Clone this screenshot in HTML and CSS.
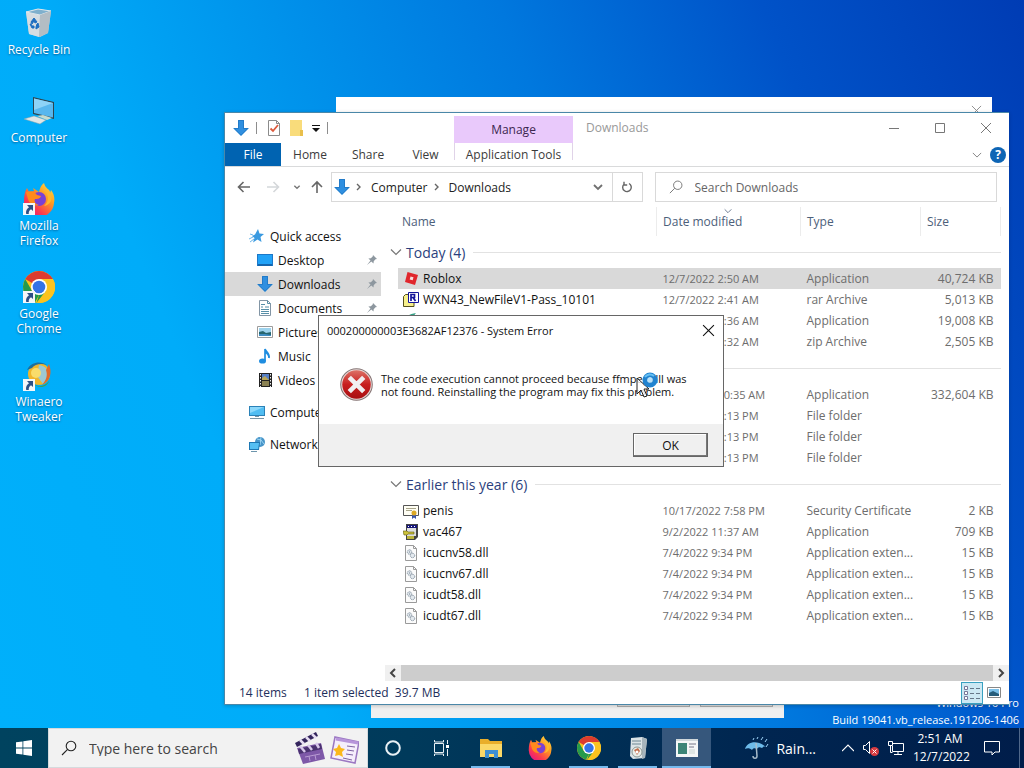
FILE: index.html
```
<!DOCTYPE html>
<html lang="en">
<head>
    <meta charset="UTF-8">
    <meta name="viewport" content="width=device-width, initial-scale=1.0">
    <title>Downloads</title>
    <link rel="stylesheet" href="styles.css">
</head>
<body>
    <!-- Shared icons -->
    <svg class="sprite" aria-hidden="true">
        <symbol id="i-down" viewBox="0 0 16 16">
            <path d="M5 0h6v8h5l-8 8-8-8h5z" fill="#2f8fe0"/>
            <path d="M5.500.5h5v8h4.300L8 15.200 1.200 8.500h4.300z" fill="none" stroke="#1e73bd" stroke-width=".7"/>
        </symbol>
        <symbol id="i-pin" viewBox="0 0 12 12">
            <path d="M7 1l4 4-1.500.3L7.700 7.200 7.500 9.500 5.300 7.400 1 11l3.500-4.400L2.400 4.500l2.400-.2L6.700 2.500z" fill="#8d979f"/>
        </symbol>
        <symbol id="i-dll" viewBox="0 0 16 16">
            <path d="M2.500.5h8l3 3v12h-11z" fill="#fbfbfb" stroke="#9a9a9a"/>
            <path d="M10.500.5v3h3" fill="none" stroke="#9a9a9a"/>
            <circle cx="6.500" cy="7" r="2.200" fill="#e3e9ee" stroke="#8695a3" stroke-dasharray="1.200 .5"/>
            <circle cx="9.500" cy="10.500" r="2.200" fill="#e3e9ee" stroke="#8695a3" stroke-dasharray="1.200 .5"/>
            <circle cx="6.500" cy="7" r=".7" fill="#8695a3"/>
        </symbol>
        <symbol id="i-chev" viewBox="0 0 12 12">
            <path d="M1 3.500l5 5 5-5" fill="none" stroke="currentColor" stroke-width="1.200"/>
        </symbol>
        <symbol id="i-close" viewBox="0 0 12 12">
            <path d="M1 1l10 10M11 1L1 11" fill="none" stroke="currentColor" stroke-width="1"/>
        </symbol>
        <symbol id="i-search" viewBox="0 0 16 16">
            <circle cx="10" cy="6" r="4.800" fill="none" stroke="currentColor" stroke-width="1.100"/>
            <path d="M6.600 9.400L1 15" stroke="currentColor" stroke-width="1.100"/>
        </symbol>
        <symbol id="i-shortcut" viewBox="0 0 12 12">
            <path d="M0 0h12v12H0z" fill="#f4f6f8"/>
            <path d="M4 2h6v6L8 6.200C6 7.500 5.500 9 5.800 11H3.200C2.500 8 3.800 5.800 6 4.200z" fill="#2d4f85"/>
        </symbol>
        <symbol id="i-chrome" viewBox="0 0 32 32">
            <circle cx="16" cy="16" r="16" fill="#fbc31f"/>
            <path d="M16 16L2.200 8A16 16 0 0 1 29.900 8H16z" fill="#dc3b2e"/>
            <path d="M2.200 8l6.900 12L16 24l-4 7.500A16 16 0 0 1 2.200 8z" fill="#259a4c"/>
            <path d="M9.100 20L16 24l-2.500 7.800L22.900 20z" fill="#259a4c"/>
            <path d="M22.900 20L15 32A16 16 0 0 0 29.900 8H16z" fill="#fbc31f"/>
            <circle cx="16" cy="16" r="8" fill="#fff"/>
            <circle cx="16" cy="16" r="6.300" fill="#3473e6"/>
        </symbol>
        <symbol id="i-firefox" viewBox="0 0 32 32">
            <defs>
                <linearGradient id="ff" x1="1" y1="0" x2=".2" y2="1">
                    <stop offset="0" stop-color="#ffe94a"/>
                    <stop offset=".4" stop-color="#ff9a22"/>
                    <stop offset=".75" stop-color="#fb3b4e"/>
                    <stop offset="1" stop-color="#e31587"/>
                </linearGradient>
            </defs>
            <path d="M4 5l2 4 5-1-1-3 6 4c1-4 2-7 5-9 1 4 3 5 5 7 1 1 1 2 1 3l1-3c3 4 4 8 3 13a15 15 0 0 1-30-2C1 13 2 8 4 5z" fill="url(#ff)"/>
            <circle cx="16" cy="16" r="7" fill="#7a41d4"/>
            <path d="M3 9c5-2 9 0 11 3l4 1c-1 3-4 3-6 3-1 2 0 5 4 6-6 2-10-2-11-6z" fill="#ff8a1c"/>
            <path d="M20 7c6 3 7 11 1 16 6-1 9-6 7-12-2-3-5-4-8-4z" fill="#ffb82c"/>
        </symbol>
    </svg>

    <main class="desktop">
        <!-- Desktop shortcuts -->
        <nav class="shortcuts">
            <a href="#" class="shortcut">
                <svg viewBox="0 0 32 32">
                    <path d="M3 5l12-3 13 2-3 22-8 4-11-3z" fill="#c3ccd3"/>
                    <path d="M3 5l14 3-1 22-10-3z" fill="#d5dde2"/>
                    <path d="M3 5l12-3 13 2-11 4z" fill="#7fb0cd" stroke="#dfe8ec"/>
                    <path d="M17 8l11-4-3 22-9 4z" fill="#b3bdc4"/>
                    <path d="M8 15l3-4 3 4-2 1-1-2-2 3zM7 17l2 4h2v-2H9l-1-2zM15 16l1 4-3 2v-2l1-3z" fill="#1d6ec1" stroke="#1d6ec1"/>
                </svg>
                <span>Recycle Bin</span>
            </a>
            <a href="#" class="shortcut">
                <svg viewBox="0 0 32 32">
                    <path d="M10 2l21 5v17l-21-5z" fill="#2e4550"/>
                    <path d="M11 3.500l19 4.500v14.500L11 18z" fill="#58b7ee"/>
                    <path d="M11 3.500l19 4.500L11 15z" fill="#8ed3f7"/>
                    <path d="M1 24l10-3 12 4-6 4z" fill="#dfe6e7" stroke="#8ba0a5" stroke-width=".5"/>
                    <path d="M14 21l6-1 9 3-5 2z" fill="#c7dccf"/>
                </svg>
                <span>Computer</span>
            </a>
            <a href="#" class="shortcut">
                <svg viewBox="0 0 32 32">
                    <use href="#i-firefox" width="32" height="32"/>
                    <use href="#i-shortcut" y="20" width="12" height="12"/>
                </svg>
                <span>Mozilla Firefox</span>
            </a>
            <a href="#" class="shortcut">
                <svg viewBox="0 0 32 32">
                    <use href="#i-chrome" width="32" height="32"/>
                    <use href="#i-shortcut" y="20" width="12" height="12"/>
                </svg>
                <span>Google Chrome</span>
            </a>
            <a href="#" class="shortcut">
                <svg viewBox="0 0 32 32">
                    <circle cx="16" cy="15" r="11" fill="#f0b62d"/>
                    <path d="M16 6a10 10 0 0 1 4 19l-6-8z" fill="#9dc8d2"/>
                    <circle cx="13" cy="14" r="5" fill="#f9dc6b"/>
                    <path d="M4 11C8 2 19 2 24 6c-6-2-12-1-15 3z" fill="#1d6f9c"/>
                    <path d="M26 5c3 8 2 17-7 21 4-5 6-9 4-15z" fill="#e06a2a"/>
                    <path d="M11 25c5 4 11 2 15-3-1 5-9 9-15 3z" fill="#3f9e56"/>
                    <use href="#i-shortcut" y="20" width="12" height="12"/>
                </svg>
                <span>Winaero Tweaker</span>
            </a>
        </nav>

        <p class="watermark">Windows 10 Pro<br>Build 19041.vb_release.191206-1406</p>

        <!-- Windows behind the explorer -->
        <div class="window back-window">
            <svg class="back-close"><use href="#i-close"/></svg>
        </div>
        <div class="window setup-window">
            <button></button>
            <button></button>
        </div>

        <!-- File explorer -->
        <section class="window explorer">
            <header class="titlebar">
                <div class="quick-bar">
                    <svg class="ic"><use href="#i-down"/></svg>
                    <i class="bar"></i>
                    <svg class="ic check" viewBox="0 0 16 16">
                        <path d="M2.500.5h8l3 3v12h-11z" fill="#fff" stroke="#8b8b8b"/>
                        <path d="M10.500.5v3h3" fill="none" stroke="#8b8b8b"/>
                        <path d="M4.500 8.500L7 11l5-6" fill="none" stroke="#dd5a3c" stroke-width="1.800"/>
                    </svg>
                    <svg class="ic" viewBox="0 0 16 16">
                        <path d="M1 0h12v10h1v6H1z" fill="#f9dc7b"/>
                        <path d="M11 10h3v6h-3z" fill="#e9bf4c"/>
                    </svg>
                    <svg class="drop" viewBox="0 0 8 8"><path d="M0 1.500h8" stroke="#111"/><path d="M0 4h8L4 8z" fill="#111"/></svg>
                    <i class="bar"></i>
                </div>
                <div class="context-tab">Manage</div>
                <h1>Downloads</h1>
                <div class="controls">
                    <button aria-label="Minimize"><svg viewBox="0 0 12 12"><path d="M1 6.500h10" stroke="currentColor"/></svg></button>
                    <button aria-label="Maximize"><svg viewBox="0 0 12 12"><path d="M1.500 1.500h9v9h-9z" fill="none" stroke="currentColor"/></svg></button>
                    <button aria-label="Close"><svg><use href="#i-close"/></svg></button>
                </div>
            </header>

            <nav class="ribbon">
                <a href="#" class="file">File</a>
                <a href="#">Home</a>
                <a href="#">Share</a>
                <a href="#" class="view">View</a>
                <a href="#" class="tools">Application Tools</a>
                <span class="ribbon-end">
                    <svg class="chev"><use href="#i-chev"/></svg>
                    <button class="help" aria-label="Help">?</button>
                </span>
            </nav>

            <div class="navrow">
                <div class="arrows">
                    <svg viewBox="0 0 14 14"><path d="M13 7H2M6.500 2L1.500 7l5 5" fill="none" stroke="#666" stroke-width="1.600"/></svg>
                    <svg viewBox="0 0 14 14"><path d="M1 7h11M7.500 2l5 5-5 5" fill="none" stroke="#d4d7da" stroke-width="1.600"/></svg>
                    <svg class="tiny" viewBox="0 0 12 12"><path d="M2 4l4 4 4-4" fill="none" stroke="#777" stroke-width="2"/></svg>
                    <svg viewBox="0 0 14 14"><path d="M7 13V2M2 7l5-5 5 5" fill="none" stroke="#666" stroke-width="1.600"/></svg>
                </div>
                <div class="address">
                    <svg class="ic"><use href="#i-down"/></svg>
                    <svg class="crumb" viewBox="0 0 8 8"><path d="M2 1l3 3-3 3" fill="none" stroke="#666" stroke-width="1.400"/></svg>
                    <a href="#">Computer</a>
                    <svg class="crumb" viewBox="0 0 8 8"><path d="M2 1l3 3-3 3" fill="none" stroke="#666" stroke-width="1.400"/></svg>
                    <a href="#">Downloads</a>
                    <svg class="open" viewBox="0 0 12 12"><path d="M2 4l4 4 4-4" fill="none" stroke="#707070" stroke-width="1.800"/></svg>
                    <button class="refresh" aria-label="Refresh">
                        <svg viewBox="0 0 12 12"><path d="M3 3.200A4.300 4.300 0 1 0 8 2.500M3 .8v3.200h3.200" fill="none" stroke="#666" stroke-width="1.400"/></svg>
                    </button>
                </div>
                <label class="search">
                    <svg><use href="#i-search"/></svg>
                    <input type="text" placeholder="Search Downloads" aria-label="Search Downloads">
                </label>
            </div>

            <div class="content">
                <aside class="sidebar">
                    <a href="#" class="top">
                        <svg viewBox="0 0 16 16"><path d="M9 1l1.500 4.500L15 6l-3.500 3 1 5-4-2.500L4 14.500 5.500 10 3 8l3-1.500z" fill="#3a9ae0"/><path d="M0 11l4-2M1 14l4-3M1 6l3 1" stroke="#6db6ea"/></svg>
                        Quick access
                    </a>
                    <a href="#">
                        <svg viewBox="0 0 16 16"><path d="M0 2h16v12H0z" fill="#1c78c8"/><path d="M1 3h14v9H1z" fill="#21a2f7"/><path d="M1 13h14" stroke="#0b4a85" stroke-width=".8"/></svg>
                        Desktop <svg class="pin"><use href="#i-pin"/></svg>
                    </a>
                    <a href="#" class="current">
                        <svg><use href="#i-down"/></svg>
                        Downloads <svg class="pin"><use href="#i-pin"/></svg>
                    </a>
                    <a href="#">
                        <svg viewBox="0 0 16 16"><path d="M2.500.5h8l3 3v12h-11z" fill="#fff" stroke="#8295a5"/><path d="M10.500.5v3h3M4 4.500h4M4 7h2M8 7h4M4 9.500h8M4 11.500h8M4 13.500h8" fill="none" stroke="#578fa8"/></svg>
                        Documents <svg class="pin"><use href="#i-pin"/></svg>
                    </a>
                    <a href="#">
                        <svg viewBox="0 0 16 16"><path d="M.5 2.500h15v11H.5z" fill="#fff" stroke="#9c9c9c"/><path d="M2 4h12v8H2z" fill="#9ed3ed"/><path d="M2 8l4-1 3 2 5-1v4H2z" fill="#27656e"/><path d="M2 10l6 0 6 1v1H2z" fill="#3f8cc1"/></svg>
                        Pictures
                    </a>
                    <a href="#">
                        <svg viewBox="0 0 16 16"><ellipse cx="5.500" cy="13" rx="3.500" ry="2.600" fill="#1f8de0"/><path d="M8 13V1c1 3 5 4 4 9M8 4c2 1 4 3 4 6" fill="none" stroke="#1f8de0" stroke-width="1.700"/></svg>
                        Music
                    </a>
                    <a href="#">
                        <svg viewBox="0 0 16 16"><path d="M2 1h13v14H2z" fill="#222"/><path d="M5 2h7v6H5z" fill="#557fc5"/><path d="M5 9h7v5H5z" fill="#8a8152"/><path d="M5 6l3-2 4 4H5z" fill="#b9a658"/><path d="M3.500 2v13M13.500 2v13" stroke="#eee" stroke-dasharray="1.500 1.500"/></svg>
                        Videos
                    </a>
                    <a href="#" class="top group">
                        <svg viewBox="0 0 16 16"><path d="M0 2h16v10H0z" fill="#2b82b8"/><path d="M1 3h14v8H1z" fill="#51bdf2"/><path d="M1 3h14L1 9z" fill="#8cd8fb"/><path d="M6 12.500h4M1 14.500h14" stroke="#7994a5"/></svg>
                        Computer
                    </a>
                    <a href="#" class="top group">
                        <svg viewBox="0 0 16 16"><circle cx="11" cy="6" r="5" fill="#4795c9"/><path d="M8 3l4 1 3 4M12 1l-1 8" stroke="#9bd4f2" fill="none"/><path d="M0 6h11l-1 8H0z" fill="#1d78b4"/><path d="M1 7h9l-.8 6H1z" fill="#55bff3"/><path d="M2 15.500h6" stroke="#6c95ac"/></svg>
                        Network
                    </a>
                </aside>

                <div class="files">
                    <table>
                        <colgroup>
                            <col>
                            <col class="c-date">
                            <col class="c-type">
                            <col class="c-size">
                        </colgroup>
                        <thead>
                            <tr>
                                <th>Name</th>
                                <th class="sorted">Date modified<svg><use href="#i-chev"/></svg></th>
                                <th>Type</th>
                                <th>Size</th>
                            </tr>
                        </thead>
                        <tbody>
                            <tr class="group-row"><td colspan="4"><div><svg><use href="#i-chev"/></svg>Today (4)</div></td></tr>
                            <tr class="selected">
                                <td><svg viewBox="0 0 16 16"><path d="M4.500 1L15 4l-3 10L2 11z" fill="#e0262c"/><path d="M7.500 5.500l3 .8-.8 3-3-.8z" fill="#f7dede"/></svg>Roblox</td>
                                <td class="date">12/7/2022 2:50 AM</td><td>Application</td><td>40,724 KB</td>
                            </tr>
                            <tr>
                                <td><svg viewBox="0 0 16 16"><path d="M.5 4.500l2-2H6v2h5v10H.5z" fill="#f7f08c" stroke="#55501c"/><path d="M5.500.5h10v10h-10z" fill="#fff" stroke="#14149a"/><path d="M8 9V2.500h3.500v3H8m2 0L12.500 9" fill="none" stroke="#14149a" stroke-width="1.700"/></svg>WXN43_NewFileV1-Pass_10101</td>
                                <td class="date">12/7/2022 2:41 AM</td><td>rar Archive</td><td>5,013 KB</td>
                            </tr>
                            <tr>
                                <td><svg viewBox="0 0 16 16"><path d="M2 8C3 3 6 1 13 0 9 3 14 9 8 14 4 15 2 12 2 8z" fill="#35a387"/></svg></td>
                                <td class="date">12/7/2022 2:36 AM</td><td>Application</td><td>19,008 KB</td>
                            </tr>
                            <tr>
                                <td></td>
                                <td class="date">12/7/2022 2:32 AM</td><td>zip Archive</td><td>2,505 KB</td>
                            </tr>
                            <tr class="group-row"><td colspan="4"><div></div></td></tr>
                            <tr>
                                <td></td>
                                <td class="date">12/1/2022 10:35 AM</td><td>Application</td><td>332,604 KB</td>
                            </tr>
                            <tr>
                                <td></td>
                                <td class="date">12/1/2022 1:13 PM</td><td>File folder</td><td></td>
                            </tr>
                            <tr>
                                <td></td>
                                <td class="date">12/1/2022 1:13 PM</td><td>File folder</td><td></td>
                            </tr>
                            <tr>
                                <td></td>
                                <td class="date">12/1/2022 1:13 PM</td><td>File folder</td><td></td>
                            </tr>
                            <tr class="group-row"><td colspan="4"><div><svg><use href="#i-chev"/></svg>Earlier this year (6)</div></td></tr>
                            <tr>
                                <td><svg viewBox="0 0 16 16"><path d="M.5 2.500h15v10H.5z" fill="#fffef4" stroke="#555"/><path d="M3 5.500h10M3 7.500h6" stroke="#a8a58a"/><path d="M9 11h4v5l-2-1.500L9 16z" fill="#3a55a8"/><circle cx="11" cy="10" r="2.500" fill="#dca823"/></svg>penis</td>
                                <td class="date">10/17/2022 7:58 PM</td><td>Security Certificate</td><td>2 KB</td>
                            </tr>
                            <tr>
                                <td><svg viewBox="0 0 16 16"><path d="M3 0h12v13l-3 3H3z" fill="#444"/><path d="M4 4h9v8H4z" fill="#dedede"/><path d="M4 1h10v3H4z" fill="#15157a"/><path d="M5 2.500h8" stroke="#fff" stroke-dasharray="1 2"/><path d="M0 7h4l1 1h6v2H5l-1 1H1z" fill="#ccc23a" stroke="#5f5a10" stroke-width=".6"/><path d="M4 12h7v3H4z" fill="#bcb43b"/></svg>vac467</td>
                                <td class="date">9/2/2022 11:37 AM</td><td>Application</td><td>709 KB</td>
                            </tr>
                            <tr>
                                <td><svg><use href="#i-dll"/></svg>icucnv58.dll</td>
                                <td class="date">7/4/2022 9:34 PM</td><td>Application exten...</td><td>15 KB</td>
                            </tr>
                            <tr>
                                <td><svg><use href="#i-dll"/></svg>icucnv67.dll</td>
                                <td class="date">7/4/2022 9:34 PM</td><td>Application exten...</td><td>15 KB</td>
                            </tr>
                            <tr>
                                <td><svg><use href="#i-dll"/></svg>icudt58.dll</td>
                                <td class="date">7/4/2022 9:34 PM</td><td>Application exten...</td><td>15 KB</td>
                            </tr>
                            <tr>
                                <td><svg><use href="#i-dll"/></svg>icudt67.dll</td>
                                <td class="date">7/4/2022 9:34 PM</td><td>Application exten...</td><td>15 KB</td>
                            </tr>
                        </tbody>
                    </table>
                    <div class="scrollbar">
                        <svg viewBox="0 0 16 16"><path d="M10 4L6 8l4 4" fill="none" stroke="#444" stroke-width="2"/></svg>
                        <div class="thumb"></div>
                        <svg viewBox="0 0 16 16"><path d="M6 4l4 4-4 4" fill="none" stroke="#444" stroke-width="2"/></svg>
                    </div>
                </div>
            </div>

            <footer class="status">
                <span class="count">14 items</span>
                <span>1 item selected&nbsp; 39.7 MB</span>
                <button class="view-btn active" aria-label="Details">
                    <svg viewBox="0 0 16 16"><path d="M.5 1.500h3v3h-3zM.5 6.500h3v3h-3zM.5 11.500h3v3h-3z" fill="#fff" stroke="#779"/><path d="M6 3.500h10M6 8.500h10M6 13.500h10" stroke="#678" stroke-dasharray="4 2"/></svg>
                </button>
                <button class="view-btn" aria-label="Large icons">
                    <svg viewBox="0 0 16 16"><path d="M1.500 2.500h13v10h-13z" fill="#fff" stroke="#888"/><path d="M3 4h10v7H3z" fill="#7cc0e8"/><path d="M3 8l4-2 6 3v2H3z" fill="#275d7b"/></svg>
                </button>
            </footer>
        </section>

        <!-- Error dialog -->
        <section class="dialog" role="alertdialog" aria-labelledby="dialog-title">
            <header>
                <h2 id="dialog-title">000200000003E3682AF12376 - System Error</h2>
                <button aria-label="Close"><svg><use href="#i-close"/></svg></button>
            </header>
            <div class="message">
                <svg viewBox="0 0 32 32">
                    <defs>
                        <linearGradient id="err" x1="0" y1="0" x2="0" y2="1">
                            <stop offset="0" stop-color="#dd7267"/>
                            <stop offset=".5" stop-color="#c81e1e"/>
                            <stop offset="1" stop-color="#a80f12"/>
                        </linearGradient>
                    </defs>
                    <circle cx="16" cy="16" r="15.300" fill="#ead9d7" stroke="#857575"/>
                    <circle cx="16" cy="16" r="13.800" fill="url(#err)"/>
                    <path d="M9 9l14 14M23 9L9 23" stroke="#f1eef0" stroke-width="4.500"/>
                </svg>
                <p>The code execution cannot proceed because ffmpeg.dll was<br>not found. Reinstalling the program may fix this problem.</p>
            </div>
            <footer><button>OK</button></footer>
        </section>

        <!-- Pointer with busy ring -->
        <svg class="cursor" viewBox="0 0 24 30">
            <path d="M1 7v16l4-4 3 7 3-1-3-7h5z" fill="#fff" fill-opacity=".8" stroke="#222"/>
            <circle cx="14" cy="9" r="5" fill="none" stroke="#2183d0" stroke-width="5"/>
            <path d="M9 6a6 6 0 0 1 9-1" fill="none" stroke="#67c0f2" stroke-width="2"/>
            <circle cx="14" cy="9" r="2.800" fill="#b9e2fa"/>
        </svg>
    </main>

    <!-- Taskbar -->
    <footer class="taskbar">
        <button class="start" aria-label="Start">
            <svg viewBox="0 0 16 16"><path d="M0 2.300L6.500 1.400v6.200H0zM7.300 1.300L16 0v7.600H7.300zM0 8.400h6.500v6.200L0 13.700zM7.300 8.400H16V16l-8.700-1.300z" fill="#fff"/></svg>
        </button>
        <label class="task-search">
            <svg><use href="#i-search"/></svg>
            <input type="text" placeholder="Type here to search" aria-label="Type here to search">
            <svg class="art" viewBox="0 0 66 34">
                <path d="M4 17l24-5 4 16-22 5z" fill="#7e58a8"/>
                <path d="M5 18l23-5 1 5-23 5z" fill="#4a3270"/>
                <path d="M7 15l5 6M15 14l4 5M23 12l3 5" stroke="#d8c8ea" stroke-width="2.500"/>
                <path d="M2 12L23 1l2 4L4 16z" fill="#33245c"/>
                <path d="M7 9l4 4M13 6l4 4M19 3l4 4" stroke="#e6dcf2" stroke-width="2.500"/>
                <path d="M12 26l15-3M16 25l1 5M22 24l1 5" stroke="#b79ad2"/>
                <path d="M42 6l24 5-4 21-24-5z" fill="#f5eefb" stroke="#9b77c2" stroke-width="1.500"/>
                <path d="M43 8l22 4" stroke="#b795da" stroke-width="3"/>
                <path d="M54 15l8 1M54 19l7 1M53 23l7 1M50 27l9 2" stroke="#7d62a0"/>
                <path d="M46 13l2 4 4 1-3 3 1 5-4-2-4 1 1-4-3-3 4-1z" fill="#fbb81a"/>
            </svg>
        </label>
        <button class="task" aria-label="Cortana"><svg viewBox="0 0 24 24"><circle cx="12" cy="12" r="6.800" fill="none" stroke="#e9f1f5" stroke-width="2"/></svg></button>
        <button class="task" aria-label="Task View"><svg viewBox="0 0 24 24"><path d="M4.500 7.500h9v9h-9zM4.500 4v2h9V4M4.500 20v-2h9v2M17.500 4v4M17.500 13v7" fill="none" stroke="#e9f1f5"/><path d="M16 9h3v3h-3z" fill="#fff"/></svg></button>
        <button class="task running" aria-label="File Explorer"><svg viewBox="0 0 24 24"><path d="M1 3h8l2 2h12v16H1z" fill="#e9ae2b"/><path d="M1 8h22v13H1z" fill="#fbd868"/><path d="M6 14h13v8h-4v-4h-5v4H6z" fill="#3e8fd3"/></svg></button>
        <button class="task" aria-label="Firefox"><svg><use href="#i-firefox"/></svg></button>
        <button class="task running" aria-label="Chrome"><svg><use href="#i-chrome"/></svg></button>
        <button class="task running" aria-label="Installer"><svg viewBox="0 0 24 24"><path d="M5 2l11-1 5 2-2 19-12 1-3-3z" fill="#dbe3e6"/><path d="M16 1l5 2-2 19-3 1z" fill="#a6b4bc"/><path d="M6 5h9M6 8h9" stroke="#6c8793"/><circle cx="11" cy="16" r="5" fill="#e9eee9" stroke="#8a9693"/><path d="M8 14l4-2 2 3-3 4z" fill="#c26d4b"/><circle cx="11" cy="16" r="1.500" fill="#fff"/></svg></button>
        <button class="task running active" aria-label="System Error"><svg viewBox="0 0 24 24"><path d="M1 3h22v18H1z" fill="#f5f7f7"/><path d="M3 7h9v11H3z" fill="#3d8577"/><path d="M14 8h7M14 11h5" stroke="#778"/><path d="M14 13h6v5h-6z" fill="#dfe6e4"/><path d="M1 4h22" stroke="#cfd7da" stroke-width="2"/></svg></button>

        <div class="tray">
            <a href="#" class="weather">
                <svg viewBox="0 0 24 24"><path d="M0 13C2 6 12 3 21 11c-2-1-3 0-4 1-2-1-4-1-5 1-2-1-4-1-5 1-2-2-5-2-7-1z" fill="#6dbbea"/><path d="M11 7l1 13c0 3-4 3-4 0" fill="none" stroke="#a8bccb" stroke-width="1.500"/><path d="M12 3l1-2M16 4l2-3M20 6l2-3M8 4l1-2M21 11l2-3" stroke="#9ed4f8"/></svg>
                Rain...
            </a>
            <svg class="tray-up" viewBox="0 0 12 12"><path d="M0 9l6-6 6 6" fill="none" stroke="#fff" stroke-width="1.200"/></svg>
            <svg viewBox="0 0 16 16"><path d="M.5 5.500h2l4-4v12l-4-4h-2z" fill="none" stroke="#fff"/><circle cx="11.500" cy="11.500" r="4.500" fill="#d73a3f"/><path d="M9.500 9.500l4 4M13.500 9.500l-4 4" stroke="#fff"/></svg>
            <svg viewBox="0 0 16 16"><path d="M5 3.500h10.500v8H4.500V6M10 11.500v3M6 14.500h8M.5 1.500h4v4h-4zM2.500 5.500v7h2" fill="none" stroke="#fff"/></svg>
            <time>2:51 AM<br>12/7/2022</time>
            <svg class="notice" viewBox="0 0 16 16"><path d="M.5 1.500h15v10.500H11l-3 3v-3H.5z" fill="none" stroke="#fff"/></svg>
        </div>
    </footer>
</body>
</html>
```
FILE: styles.css
```
* {
    box-sizing: border-box;
}
body {
    margin: 0;
    height: 100vh;
    display: flex;
    flex-direction: column;
    overflow: hidden;
    font-family: "Open Sans", "Noto Sans", sans-serif;
    font-size: 12px;
    line-height: 15px;
    color: #111;
}
h1, h2, p {
    margin: 0;
    font-size: 12px;
    font-weight: normal;
}
a {
    color: inherit;
    text-decoration: none;
}
button, input {
    font: inherit;
    color: inherit;
    border: none;
    background: none;
    padding: 0;
}
svg {
    width: 16px;
    height: 16px;
    flex: none;
}
.sprite {
    position: absolute;
    width: 0;
    height: 0;
}

/* Desktop */
.desktop {
    position: relative;
    flex: 1;
    background: linear-gradient(68deg, #00b0fb 0%, #00acf9 25%, #0096ed 40%, #0078de 60%, #0052c8 80%, #003cb4 100%);
}
.shortcuts {
    width: 78px;
}
.shortcut {
    height: 88px;
    padding-top: 7px;
    display: flex;
    flex-direction: column;
    align-items: center;
    gap: 3px;
    color: #fff;
    text-align: center;
    text-shadow: 0 1px 2px rgba(0, 40, 90, 0.6);
}
.shortcut svg {
    width: 32px;
    height: 32px;
}
.shortcut span {
    max-width: 64px;
}
.watermark {
    position: absolute;
    right: 5px;
    bottom: 0;
    color: #fff;
    font-size: 11px;
    line-height: 17px;
    text-align: right;
}

/* Windows */
.window {
    position: absolute;
    background: #fff;
}
.back-window {
    top: 97px;
    left: 336px;
    right: 32px;
    bottom: 90px;
    color: #888;
}
.back-close {
    position: absolute;
    top: 8px;
    right: 10px;
    width: 11px;
    height: 11px;
}
.setup-window {
    left: 371px;
    right: 240px;
    bottom: 10px;
    height: 100px;
    background: #f0f0f0;
    padding: 0 11px 11px;
    display: flex;
    justify-content: flex-end;
    align-items: flex-end;
    gap: 10px;
}
.setup-window button {
    width: 73px;
    height: 23px;
    background: #e1e1e1;
    border: 1px solid #adadad;
}
.explorer {
    top: 112px;
    left: 224px;
    right: 15px;
    bottom: 23px;
    border: 1px solid #4a87a8;
    border-right: none;
    display: flex;
    flex-direction: column;
    box-shadow: 0 1px 4px rgba(0, 0, 0, 0.2);
}

/* Title bar */
.titlebar {
    height: 30px;
    display: flex;
}
.quick-bar {
    width: 229px;
    padding-left: 8px;
    display: flex;
    align-items: center;
    gap: 7px;
}
.bar {
    width: 1px;
    height: 12px;
    background: #8d8d8d;
}
.check {
    margin-left: 2px;
}
.drop {
    width: 8px;
    height: 8px;
}
.context-tab {
    width: 119px;
    margin-top: 3px;
    background: #e9c9fb;
    color: #3c2750;
    line-height: 28px;
    text-align: center;
}
.titlebar h1 {
    flex: 1;
    padding-left: 13px;
    line-height: 30px;
    color: #999;
}
.controls {
    display: flex;
    color: #777;
}
.controls button {
    width: 46px;
    display: flex;
    align-items: center;
    justify-content: center;
}
.controls svg {
    width: 12px;
    height: 12px;
}

/* Ribbon tabs */
.ribbon {
    height: 24px;
    display: flex;
    border-bottom: 1px solid #d9dadb;
    line-height: 24px;
    color: #3b3b3b;
}
.ribbon a {
    width: 58px;
    text-align: center;
}
.ribbon .file {
    width: 56px;
    background: #0063b1;
    color: #fff;
}
.ribbon .view {
    width: 57px;
}
.ribbon .tools {
    width: 119px;
    height: 17px;
    border: solid #e0d3e8;
    border-width: 0 1px;
}
.ribbon-end {
    margin-left: auto;
    padding-right: 3px;
    display: flex;
    align-items: center;
    gap: 8px;
    color: #888;
}
.chev {
    width: 10px;
    height: 10px;
}
.help {
    width: 16px;
    height: 16px;
    border-radius: 50%;
    background: #0e65b5;
    color: #fff;
    font-weight: bold;
    line-height: 16px;
}

/* Address row */
.navrow {
    height: 40px;
    padding: 0 12px 0 12px;
    display: flex;
    align-items: center;
}
.arrows {
    width: 94px;
    display: flex;
    align-items: center;
    gap: 15px;
}
.arrows svg {
    width: 14px;
    height: 14px;
}
.arrows .tiny {
    width: 8px;
    height: 8px;
    margin: 0 -6px 0 -2px;
}
.address, .search {
    height: 30px;
    display: flex;
    align-items: center;
    border: 1px solid #d9d9d9;
}
.address {
    flex: 308;
    padding-left: 2px;
}
.address a {
    color: #222;
}
.crumb {
    width: 8px;
    height: 8px;
    margin: 0 8px 0 5px;
}
.open {
    width: 12px;
    height: 12px;
    margin: 0 8px 0 auto;
}
.refresh {
    width: 30px;
    height: 28px;
    border-left: 1px solid #d9d9d9;
    display: flex;
    align-items: center;
    justify-content: center;
}
.refresh svg {
    width: 12px;
    height: 12px;
}
.search {
    flex: 328;
    margin-left: 12px;
    padding-left: 13px;
    gap: 12px;
    color: #777;
}
.search svg {
    width: 14px;
    height: 14px;
}
.search input {
    flex: 1;
    min-width: 0;
}
input::placeholder {
    color: #666;
    opacity: 1;
}

/* Sidebar */
.content {
    flex: 1;
    min-height: 0;
    display: flex;
}
.sidebar {
    width: 156px;
    padding-top: 17px;
}
.sidebar a {
    height: 24px;
    padding: 0 3px 0 32px;
    display: flex;
    align-items: center;
    gap: 5px;
}
.sidebar .top {
    padding-left: 24px;
}
.sidebar .current {
    background: #d9d9d9;
}
.sidebar .group {
    margin-top: 8px;
}
.sidebar .pin {
    width: 12px;
    height: 12px;
    margin-left: auto;
}

/* File list */
.files {
    flex: 1;
    min-width: 0;
    padding-left: 4px;
    display: flex;
    flex-direction: column;
    justify-content: space-between;
}
table {
    width: calc(100% - 21px);
    margin-left: 13px;
    border-collapse: collapse;
    table-layout: fixed;
}
.c-date {
    width: 144px;
}
.c-type {
    width: 120px;
}
.c-size {
    width: 80px;
}
th, td {
    height: 21px;
    padding: 0 6px;
    text-align: left;
    white-space: nowrap;
}
th {
    position: relative;
    height: 29px;
    padding-left: 4px;
    font-weight: normal;
    color: #4c607a;
    border-right: 1px solid #ececec;
}
th + th {
    padding-left: 6px;
}
.sorted svg {
    position: absolute;
    top: 0;
    left: 67px;
    width: 8px;
    height: 8px;
}
td {
    color: #6d6d6d;
}
td:first-child {
    padding-left: 5px;
    color: #111;
}
td:first-child svg {
    margin-right: 4px;
    vertical-align: -4px;
}
td:last-child {
    padding-right: 7px;
    text-align: right;
}
.date {
    font-size: 11px;
}
.selected {
    background: #d9d9d9;
}
.group-row td, .group-row td:first-child {
    height: 32px;
    padding: 0;
    text-align: left;
}
.group-row div {
    margin-left: -8px;
    display: flex;
    align-items: center;
    gap: 4px;
    font-size: 14px;
    color: #2b3f7d;
}
.group-row div::after {
    content: "";
    flex: 1;
    margin-left: 4px;
    border-top: 1px solid #e2e2e2;
}
.group-row td:first-child svg {
    width: 12px;
    height: 12px;
    margin: 0;
    color: #777;
}
.scrollbar {
    height: 16px;
    display: flex;
    background: #f0f0f0;
}
.thumb {
    flex: 1;
    background: #cdcdcd;
}

/* Status bar */
.status {
    height: 23px;
    padding: 0 4px 0 14px;
    display: flex;
    align-items: center;
    color: #1e2f5c;
}
.count {
    width: 65px;
}
.view-btn {
    width: 22px;
    height: 22px;
    display: flex;
    align-items: center;
    justify-content: center;
}
.view-btn.active {
    margin-left: auto;
    background: #cce8f3;
    border: 1px solid #38a0c0;
}

/* Error dialog */
.dialog {
    position: absolute;
    top: 315px;
    left: 318px;
    width: 406px;
    border: 1px solid #666;
    background: #fff;
    color: #111;
}
.dialog header {
    height: 29px;
    padding: 0 8px;
    display: flex;
    align-items: center;
    justify-content: space-between;
}
.dialog h2 {
    font-size: 11px;
}
.dialog header svg {
    display: block;
    width: 13px;
    height: 13px;
}
.message {
    height: 79px;
    padding-left: 21px;
    display: flex;
    align-items: center;
    gap: 8px;
}
.message svg {
    width: 33px;
    height: 33px;
}
.message p {
    font-size: 11px;
    line-height: 13px;
}
.dialog footer {
    height: 42px;
    padding-right: 15px;
    display: flex;
    align-items: center;
    justify-content: flex-end;
    background: #f0f0f0;
}
.dialog footer button {
    width: 75px;
    height: 24px;
    border: 1px solid #666;
    box-shadow: inset -1px -1px #777, inset 1px 1px #fff;
}
.cursor {
    position: absolute;
    top: 371px;
    left: 636px;
    width: 24px;
    height: 30px;
}

/* Taskbar */
.taskbar {
    height: 40px;
    display: flex;
    background: linear-gradient(90deg, #00435f, #003a5b 40%, #002550 75%, #001d4a);
    color: #fff;
}
.start {
    width: 48px;
    display: flex;
    align-items: center;
    justify-content: center;
}
.task-search {
    width: 320px;
    padding: 0 8px 0 12px;
    display: flex;
    align-items: center;
    gap: 12px;
    background: #f2f2f2;
    border: 1px solid #d5dadd;
    color: #222;
    font-size: 14px;
}
.task-search input {
    flex: 1;
    min-width: 0;
}
.task-search input::placeholder {
    color: #444;
}
.task-search .art {
    width: 66px;
    height: 34px;
}
.task {
    position: relative;
    width: 49px;
    display: flex;
    align-items: center;
    justify-content: center;
}
.task svg {
    width: 24px;
    height: 24px;
}
.running::after {
    content: "";
    position: absolute;
    left: 5px;
    right: 5px;
    bottom: 0;
    height: 2px;
    background: #76b9ed;
}
.active.task {
    background: #36577c;
}
.active.task::after {
    left: 0;
    right: 0;
}
.tray {
    margin-left: auto;
    padding-right: 4px;
    display: flex;
    align-items: center;
    gap: 9px;
}
.tray::after {
    content: "";
    width: 1px;
    height: 40px;
    margin-left: 10px;
    background: #50688a;
}
.weather {
    margin-right: 17px;
    display: flex;
    align-items: center;
    gap: 7px;
    font-size: 14px;
}
.weather svg {
    width: 24px;
    height: 24px;
}
.tray .tray-up {
    width: 12px;
    height: 12px;
}
time {
    width: 54px;
    line-height: 18px;
    text-align: center;
}
.tray .notice {
    margin-left: 8px;
}
```
